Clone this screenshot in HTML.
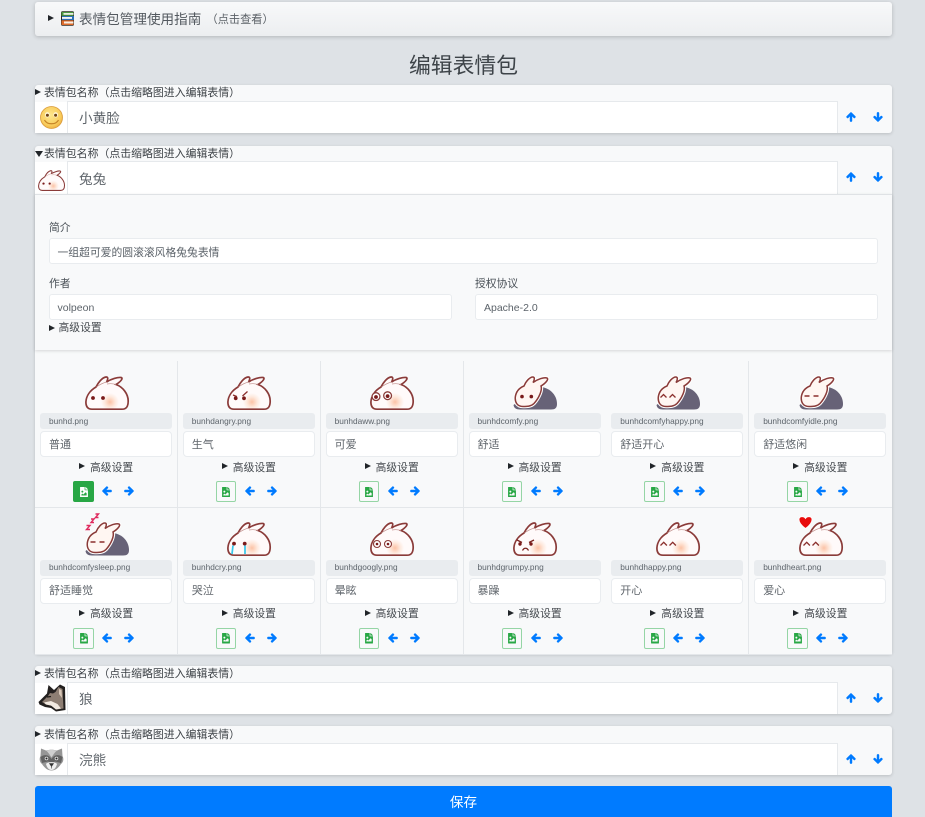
<!DOCTYPE html>
<html lang="zh"><head><meta charset="utf-8"><title>编辑表情包</title>
<style>
html,body{margin:0;padding:0;width:925px;height:817px;overflow:hidden;background:#dee2e6}
body{position:relative;font-family:"Liberation Sans","Noto Sans CJK SC",sans-serif;color:#212529}
div,span,svg{position:absolute;box-sizing:border-box}
#w{left:0;top:0;width:925px;height:817px;overflow:hidden;background:#dee2e6;filter:blur(.35px)}
.tx{white-space:nowrap;line-height:1}
.card{left:35px;width:857px;background:#f8f9fa;border-radius:3px;box-shadow:0 1px 3px rgba(0,0,0,.16)}
.lab{font-size:10.9px;color:#3d4247;left:44px}
.tri{width:0;height:0;border-style:solid;border-width:3.7px 0 3.7px 6.2px;border-color:transparent transparent transparent #212529}
.trd{width:0;height:0;border-style:solid;border-width:6px 4px 0 4px;border-color:#212529 transparent transparent transparent}
.inp{background:#fff;border:1px solid #e6e9ec}
.big{font-size:13.6px;color:#60666c;left:79px}
.thumb{left:35px;width:33px;background:#fff;border-right:1px solid #e3e6e9}
.field{background:#fff;border:1px solid #e9ecef;border-radius:3px}
.fl{font-size:10.8px;color:#495057}
.ft{font-size:10.8px;color:#5c636a}
.cell{width:143px;height:147px;background:#f8f9fa;border-right:1px solid #e4e7ea;border-bottom:1px solid #e4e7ea}
.pill{left:5px;top:52px;width:132px;height:16px;background:#e9ecef;border-radius:3px}
.pt{left:14px;top:55.5px;font-size:8.3px;color:#5d646b}
.in{left:5px;top:70px;width:132px;height:26px;background:#fff;border:1px solid #e9ecef;border-radius:4px}
.it{left:14px;top:78.8px;font-size:11px;color:#60666c}
.adv{left:55px;top:101.8px;font-size:10.8px;color:#464b50}
.t2{left:44px;top:102.3px}
.bt{left:38px;top:120px;width:20.5px;height:21px;border:1px solid #95d5a5;border-radius:2px;background:#f8f9fa}
.bt.on{background:#28a745;border-color:#28a745}
.fi{left:5.5px;top:4.5px;width:8px;height:10.5px;fill:#28a745}
.on .fi{fill:#fff}
.ar{width:10px;height:10px;fill:#007bff;stroke:#007bff;stroke-width:45}
.bn{width:44px;height:34px;left:49.5px;top:15px;overflow:visible}
</style></head><body>
<div id="w">
<svg width="0" height="0" style="left:0;top:0">
<defs>
<radialGradient id="pe" gradientUnits="userSpaceOnUse" cx="25" cy="26" r="9"><stop offset="0" stop-color="#fcc3a6"/><stop offset=".6" stop-color="#feeadf"/><stop offset="1" stop-color="#fffafa"/></radialGradient>
<path id="fileic" d="M384 121.941V128H256V0h6.059a24 24 0 0 1 16.97 7.029l97.941 97.941a24.002 24.002 0 0 1 7.03 16.971zM248 160c-13.2 0-24-10.8-24-24V0H24C10.745 0 0 10.745 0 24v464c0 13.255 10.745 24 24 24h336c13.255 0 24-10.745 24-24V160H248zm-135.455 16c26.51 0 48 21.49 48 48s-21.49 48-48 48-48-21.49-48-48 21.491-48 48-48zm208 240h-256l.485-48.485L104.545 328c4.686-4.686 11.799-4.201 16.485.485L160.545 368 264.06 264.485c4.686-4.686 12.284-4.686 16.971 0L320.545 304v112z"/>
<path id="arr" d="M34.9 289.5l-22.2-22.2c-9.4-9.4-9.4-24.6 0-33.9L207 39c9.4-9.4 24.6-9.4 33.9 0l194.3 194.3c9.4 9.4 9.4 24.6 0 33.9L413 289.4c-9.5 9.5-25 9.3-34.3-.4L264 168.6V456c0 13.3-10.7 24-24 24h-32c-13.3 0-24-10.7-24-24V168.6L69.2 289.1c-9.3 9.8-24.8 10-34.3.4z"/>
<g id="bun"><path d="M7 33.2C2.500 33.200.9 30 .9 26 1.200 20 5 14.500 11 11 13 7 17 1.500 21 1 23.500.8 23 3.500 21.500 6 26 3 33 1 36 1.500 38.500 2 36 5.500 31 8.500 38 11 43.200 18 43.200 25 43.200 31 41 33.200 37 33.200Z" fill="url(#pe)" stroke="#8a3b39" stroke-width="1.700"/><path d="M11.500 11C14 9 18 7 21.500 6M31 8.500C28 7.500 25 7.500 22 8" fill="none" stroke="#c08d8a" stroke-width=".7"/></g>
<g id="cmf"><path d="M24 11C35 10 44 18 44 28 44 32 42 33.500 38 33.500L7 33.500C3 33.500 1 32 .5 29Z" fill="#676277"/><path d="M10 30.500C4 30.500 1.800 26 2.300 21 3 16 6 12 11 10 13 5 17 .8 20 1 22 1.200 21.500 4 20 6.500 25 3 31 1 34 2 36 3 33 7 28 10 29.500 14 26 22 21 27.500 18 30.500 14 30.500 10 30.500Z" fill="#fff" stroke="#fff" stroke-width="3.600"/><path d="M10 30.500C4 30.500 1.800 26 2.300 21 3 16 6 12 11 10 13 5 17 .8 20 1 22 1.200 21.500 4 20 6.500 25 3 31 1 34 2 36 3 33 7 28 10 29.500 14 26 22 21 27.500 18 30.500 14 30.500 10 30.500Z" fill="#fff6f2" stroke="#8a3b39" stroke-width="1.500"/></g>
</defs></svg>

<div class="card" style="top:2px;height:34px;background:linear-gradient(#f8f9fa,#eceef0);box-shadow:0 1px 4px rgba(0,0,0,.2)"></div>
<div class="tri" style="left:48px;top:15px"></div>
<svg style="left:60px;top:11px" width="15" height="15" viewBox="0 0 15 15"><rect x="1" y=".3" width="13" height="14.400" rx="1.500" fill="#2f2a22"/><rect x="1.500" y="1" width="12" height="3.800" fill="#4c9a40"/><rect x="3.500" y="2" width="10" height="1.800" fill="#e8eee0"/><rect x="2" y="5" width="12" height="4" fill="#2c6fb4"/><rect x="2" y="6" width="10" height="1.900" fill="#f2f3f4"/><rect x="1.500" y="9.300" width="12" height="4.700" fill="#de6a2a"/><rect x="4" y="10.500" width="9.500" height="2" fill="#f6eee4"/></svg>
<div class="tx" style="left:79px;top:12.5px;font-size:13.6px;color:#53595f">表情包管理使用指南</div>
<div class="tx" style="left:206.500px;top:15px;font-size:11.2px;color:#5b6167">（点击查看）</div>
<div class="tx" style="left:1px;width:925px;text-align:center;top:54.5px;font-size:21.8px;color:#3e4449">编辑表情包</div>

<!-- card 1 -->
<div class="card" style="top:85px;height:48px"></div>
<div class="tri" style="left:35px;top:88.5px"></div>
<div class="tx lab" style="top:87.5px">表情包名称（点击缩略图进入编辑表情）</div>
<div class="thumb" style="top:102px;height:31px"></div>
<div class="inp" style="left:67px;top:101px;width:771px;height:32px;border-bottom:0"></div>
<div class="tx big" style="top:111.5px">小黄脸</div>
<svg style="left:40px;top:106px" width="23" height="23" viewBox="0 0 23 23"><defs><radialGradient id="sm" cx=".45" cy=".4" r=".65"><stop offset="0" stop-color="#fde78f"/><stop offset=".7" stop-color="#f9cd5d"/><stop offset="1" stop-color="#eba93c"/></radialGradient></defs><circle cx="11.500" cy="11.500" r="11" fill="url(#sm)" stroke="#d99a3a" stroke-width=".8"/><ellipse cx="7.300" cy="8.800" rx="2.300" ry="2.700" fill="#fff6d8"/><ellipse cx="15.700" cy="8.800" rx="2.300" ry="2.700" fill="#fff6d8"/><circle cx="7.400" cy="9.300" r="1.500" fill="#6f4213"/><circle cx="15.600" cy="9.300" r="1.500" fill="#6f4213"/><path d="M4.500 14C7 19 16 19 18.500 14" fill="none" stroke="#c68427" stroke-width="1.200"/></svg>
<svg class="ar" style="left:846px;top:112px" viewBox="0 0 448 512"><use href="#arr"/></svg>
<svg class="ar" style="left:873px;top:112px;transform:rotate(180deg)" viewBox="0 0 448 512"><use href="#arr"/></svg>

<!-- card 2 -->
<div class="card" style="top:146px;height:508px"></div>
<div class="trd" style="left:35px;top:150.5px"></div>
<div class="tx lab" style="top:148.5px">表情包名称（点击缩略图进入编辑表情）</div>
<div class="thumb" style="top:162px;height:32px"></div>
<div class="inp" style="left:67px;top:161px;width:771px;height:33px;border-bottom:0"></div>
<div class="tx big" style="top:172.5px">兔兔</div>
<svg style="left:38px;top:170px;overflow:visible" width="27" height="21" viewBox="0 0 44 34"><use href="#bun"/><circle cx="9" cy="22" r="1.800" fill="#7a1a1a"/><circle cx="19" cy="22" r="1.800" fill="#7a1a1a"/></svg>
<svg class="ar" style="left:846px;top:172px" viewBox="0 0 448 512"><use href="#arr"/></svg>
<svg class="ar" style="left:873px;top:172px;transform:rotate(180deg)" viewBox="0 0 448 512"><use href="#arr"/></svg>

<div style="left:35px;top:194px;width:857px;height:156px;background:#f8f9fa;box-shadow:0 1px 3px rgba(0,0,0,.14);border-top:1px solid #dfe2e5"></div>
<div class="tx fl" style="left:49px;top:222.5px">简介</div>
<div class="field" style="left:49px;top:238px;width:829px;height:26px"></div>
<div class="tx ft" style="left:57.5px;top:247.800px">一组超可爱的圆滚滚风格兔兔表情</div>
<div class="tx fl" style="left:49px;top:278.5px">作者</div>
<div class="field" style="left:49px;top:294px;width:403px;height:26px"></div>
<div class="tx ft" style="left:57.5px;top:302.5px;font-size:10.5px">volpeon</div>
<div class="tx fl" style="left:475px;top:278.5px">授权协议</div>
<div class="field" style="left:475px;top:294px;width:403px;height:26px"></div>
<div class="tx ft" style="left:484px;top:302.5px;font-size:10.5px">Apache-2.0</div>
<div class="tri" style="left:49px;top:324.8px"></div>
<div class="tx" style="left:58.5px;top:323px;font-size:10.8px;color:#464b50">高级设置</div>
<div style="left:35px;top:361px;width:857px;height:1px;background:#e4e7ea"></div>

<!-- row 1 -->
<div class="cell" style="left:35px;top:361px"><svg class="bn" viewBox="0 0 44 34"><use href="#bun"/><circle cx="8" cy="22" r="1.900" fill="#7a1a1a"/><circle cx="18" cy="22" r="1.900" fill="#7a1a1a"/></svg><div class="pill"></div><div class="tx pt">bunhd.png</div><div class="in"></div><div class="tx it">普通</div><div class="tri t2"></div><div class="tx adv">高级设置</div><div class="bt on"><svg class="fi" viewBox="0 0 384 512"><use href="#fileic"/></svg></div><svg class="ar" style="left:67px;top:125px;transform:rotate(-90deg)" viewBox="0 0 448 512"><use href="#arr"/></svg><svg class="ar" style="left:89px;top:125px;transform:rotate(90deg)" viewBox="0 0 448 512"><use href="#arr"/></svg></div>

<div class="cell" style="left:177.8px;top:361px"><svg class="bn" viewBox="0 0 44 34"><use href="#bun"/><circle cx="8.700" cy="22.300" r="1.900" fill="#7a1a1a"/><circle cx="17" cy="22.300" r="1.900" fill="#7a1a1a"/><path d="M6 19l4 1.600M20.500 15.500l-5 4.500" stroke="#8b2f2c" stroke-width="1.300" fill="none"/></svg><div class="pill"></div><div class="tx pt">bunhdangry.png</div><div class="in"></div><div class="tx it">生气</div><div class="tri t2"></div><div class="tx adv">高级设置</div><div class="bt"><svg class="fi" viewBox="0 0 384 512"><use href="#fileic"/></svg></div><svg class="ar" style="left:67px;top:125px;transform:rotate(-90deg)" viewBox="0 0 448 512"><use href="#arr"/></svg><svg class="ar" style="left:89px;top:125px;transform:rotate(90deg)" viewBox="0 0 448 512"><use href="#arr"/></svg></div>

<div class="cell" style="left:320.6px;top:361px"><svg class="bn" viewBox="0 0 44 34"><use href="#bun"/><circle cx="6" cy="20.600" r="3.900" fill="#fff" stroke="#8a3b39" stroke-width="1.300"/><circle cx="17.600" cy="19.700" r="3.900" fill="#fff" stroke="#8a3b39" stroke-width="1.300"/><circle cx="6" cy="21" r="1.900" fill="#7a1a1a"/><circle cx="17.600" cy="20.100" r="1.900" fill="#7a1a1a"/></svg><div class="pill"></div><div class="tx pt">bunhdaww.png</div><div class="in"></div><div class="tx it">可爱</div><div class="tri t2"></div><div class="tx adv">高级设置</div><div class="bt"><svg class="fi" viewBox="0 0 384 512"><use href="#fileic"/></svg></div><svg class="ar" style="left:67px;top:125px;transform:rotate(-90deg)" viewBox="0 0 448 512"><use href="#arr"/></svg><svg class="ar" style="left:89px;top:125px;transform:rotate(90deg)" viewBox="0 0 448 512"><use href="#arr"/></svg></div>

<div class="cell" style="left:463.5px;top:361px"><svg class="bn" viewBox="0 0 44 34"><use href="#cmf"/><circle cx="9" cy="20.600" r="1.800" fill="#7a1a1a"/><circle cx="18.300" cy="20.600" r="1.800" fill="#7a1a1a"/></svg><div class="pill"></div><div class="tx pt">bunhdcomfy.png</div><div class="in"></div><div class="tx it">舒适</div><div class="tri t2"></div><div class="tx adv">高级设置</div><div class="bt"><svg class="fi" viewBox="0 0 384 512"><use href="#fileic"/></svg></div><svg class="ar" style="left:67px;top:125px;transform:rotate(-90deg)" viewBox="0 0 448 512"><use href="#arr"/></svg><svg class="ar" style="left:89px;top:125px;transform:rotate(90deg)" viewBox="0 0 448 512"><use href="#arr"/></svg></div>

<div class="cell" style="left:606.3px;top:361px"><svg class="bn" viewBox="0 0 44 34"><use href="#cmf"/><path d="M4.500 21.500l3-3 3 3M13.500 21.500l3-3 3 3" fill="none" stroke="#8b2f2c" stroke-width="1.300"/></svg><div class="pill"></div><div class="tx pt">bunhdcomfyhappy.png</div><div class="in"></div><div class="tx it">舒适开心</div><div class="tri t2"></div><div class="tx adv">高级设置</div><div class="bt"><svg class="fi" viewBox="0 0 384 512"><use href="#fileic"/></svg></div><svg class="ar" style="left:67px;top:125px;transform:rotate(-90deg)" viewBox="0 0 448 512"><use href="#arr"/></svg><svg class="ar" style="left:89px;top:125px;transform:rotate(90deg)" viewBox="0 0 448 512"><use href="#arr"/></svg></div>

<div class="cell" style="left:749.2px;top:361px;width:142.8px;border-right:0"><svg class="bn" viewBox="0 0 44 34"><use href="#cmf"/><path d="M5.500 20h5M14.500 20h5" fill="none" stroke="#8b2f2c" stroke-width="1.400"/></svg><div class="pill"></div><div class="tx pt">bunhdcomfyidle.png</div><div class="in"></div><div class="tx it">舒适悠闲</div><div class="tri t2"></div><div class="tx adv">高级设置</div><div class="bt"><svg class="fi" viewBox="0 0 384 512"><use href="#fileic"/></svg></div><svg class="ar" style="left:67px;top:125px;transform:rotate(-90deg)" viewBox="0 0 448 512"><use href="#arr"/></svg><svg class="ar" style="left:89px;top:125px;transform:rotate(90deg)" viewBox="0 0 448 512"><use href="#arr"/></svg></div>

<!-- row 2 -->
<div class="cell" style="left:35px;top:507.5px"><svg class="bn" viewBox="0 0 44 34" style="top:14.5px"><use href="#cmf"/><path d="M5.500 20h5M14.500 20h5" fill="none" stroke="#8b2f2c" stroke-width="1.400"/><path d="M1.500 3.500h3.500l-3.500 4h3.500M6 -3h3l-3 3.500h3M10.500 -8h3l-3 3.500h3" fill="none" stroke="#df2a5e" stroke-width="1.400"/></svg><div class="pill"></div><div class="tx pt">bunhdcomfysleep.png</div><div class="in"></div><div class="tx it">舒适睡觉</div><div class="tri t2"></div><div class="tx adv">高级设置</div><div class="bt"><svg class="fi" viewBox="0 0 384 512"><use href="#fileic"/></svg></div><svg class="ar" style="left:67px;top:125px;transform:rotate(-90deg)" viewBox="0 0 448 512"><use href="#arr"/></svg><svg class="ar" style="left:89px;top:125px;transform:rotate(90deg)" viewBox="0 0 448 512"><use href="#arr"/></svg></div>

<div class="cell" style="left:177.8px;top:507.5px"><svg class="bn" viewBox="0 0 44 34" style="top:14.5px"><use href="#bun"/><path d="M6 23.500L5 32M18 23.500V32" stroke="#35c6ea" stroke-width="1.700" fill="none"/><circle cx="7" cy="21.600" r="1.900" fill="#7a1a1a"/><circle cx="17.700" cy="21.600" r="1.900" fill="#7a1a1a"/></svg><div class="pill"></div><div class="tx pt">bunhdcry.png</div><div class="in"></div><div class="tx it">哭泣</div><div class="tri t2"></div><div class="tx adv">高级设置</div><div class="bt"><svg class="fi" viewBox="0 0 384 512"><use href="#fileic"/></svg></div><svg class="ar" style="left:67px;top:125px;transform:rotate(-90deg)" viewBox="0 0 448 512"><use href="#arr"/></svg><svg class="ar" style="left:89px;top:125px;transform:rotate(90deg)" viewBox="0 0 448 512"><use href="#arr"/></svg></div>

<div class="cell" style="left:320.6px;top:507.5px"><svg class="bn" viewBox="0 0 44 34" style="top:14.5px"><use href="#bun"/><circle cx="7" cy="22" r="3.500" fill="#fff" stroke="#8a3b39" stroke-width="1.100"/><circle cx="18" cy="22" r="3.500" fill="#fff" stroke="#8a3b39" stroke-width="1.100"/><circle cx="7" cy="22" r="1.300" fill="#7a1a1a"/><circle cx="18" cy="22" r="1.300" fill="#7a1a1a"/></svg><div class="pill"></div><div class="tx pt">bunhdgoogly.png</div><div class="in"></div><div class="tx it">晕眩</div><div class="tri t2"></div><div class="tx adv">高级设置</div><div class="bt"><svg class="fi" viewBox="0 0 384 512"><use href="#fileic"/></svg></div><svg class="ar" style="left:67px;top:125px;transform:rotate(-90deg)" viewBox="0 0 448 512"><use href="#arr"/></svg><svg class="ar" style="left:89px;top:125px;transform:rotate(90deg)" viewBox="0 0 448 512"><use href="#arr"/></svg></div>

<div class="cell" style="left:463.5px;top:507.5px"><svg class="bn" viewBox="0 0 44 34" style="top:14.5px"><use href="#bun"/><circle cx="7" cy="22" r="1.700" fill="#7a1a1a"/><circle cx="18" cy="22" r="1.700" fill="#7a1a1a"/><path d="M4 18l5 2.500M21 18l-5 2.500M9.500 28.500C11 25.500 14 25.500 15.500 28.500" fill="none" stroke="#7a2320" stroke-width="1.300"/></svg><div class="pill"></div><div class="tx pt">bunhdgrumpy.png</div><div class="in"></div><div class="tx it">暴躁</div><div class="tri t2"></div><div class="tx adv">高级设置</div><div class="bt"><svg class="fi" viewBox="0 0 384 512"><use href="#fileic"/></svg></div><svg class="ar" style="left:67px;top:125px;transform:rotate(-90deg)" viewBox="0 0 448 512"><use href="#arr"/></svg><svg class="ar" style="left:89px;top:125px;transform:rotate(90deg)" viewBox="0 0 448 512"><use href="#arr"/></svg></div>

<div class="cell" style="left:606.3px;top:507.5px"><svg class="bn" viewBox="0 0 44 34" style="top:14.5px"><use href="#bun"/><path d="M4.500 23.500l3.200-3.200 3.200 3.200M13.500 23.500l3.200-3.200 3.200 3.200" fill="none" stroke="#8b2f2c" stroke-width="1.300"/></svg><div class="pill"></div><div class="tx pt">bunhdhappy.png</div><div class="in"></div><div class="tx it">开心</div><div class="tri t2"></div><div class="tx adv">高级设置</div><div class="bt"><svg class="fi" viewBox="0 0 384 512"><use href="#fileic"/></svg></div><svg class="ar" style="left:67px;top:125px;transform:rotate(-90deg)" viewBox="0 0 448 512"><use href="#arr"/></svg><svg class="ar" style="left:89px;top:125px;transform:rotate(90deg)" viewBox="0 0 448 512"><use href="#arr"/></svg></div>

<div class="cell" style="left:749.2px;top:507.5px;width:142.8px;border-right:0"><svg class="bn" viewBox="0 0 44 34" style="top:14.5px"><use href="#bun"/><path d="M4.500 23.500l3.200-3.200 3.200 3.200M13.500 23.500l3.200-3.200 3.200 3.200" fill="none" stroke="#8b2f2c" stroke-width="1.300"/><path d="M6.500 6.500C1 2.500 0-.5 0-2.500 0-5.500 4.500-6.500 6.500-3.500 8.500-6.500 13-5.500 13-2.500 13-.5 12 2.500 6.500 6.500Z" fill="#e80c0c" stroke="#fff" stroke-width=".8"/></svg><div class="pill"></div><div class="tx pt">bunhdheart.png</div><div class="in"></div><div class="tx it">爱心</div><div class="tri t2"></div><div class="tx adv">高级设置</div><div class="bt"><svg class="fi" viewBox="0 0 384 512"><use href="#fileic"/></svg></div><svg class="ar" style="left:67px;top:125px;transform:rotate(-90deg)" viewBox="0 0 448 512"><use href="#arr"/></svg><svg class="ar" style="left:89px;top:125px;transform:rotate(90deg)" viewBox="0 0 448 512"><use href="#arr"/></svg></div>

<!-- card 3 -->
<div class="card" style="top:666px;height:48px"></div>
<div class="tri" style="left:35px;top:669.5px"></div>
<div class="tx lab" style="top:668.5px">表情包名称（点击缩略图进入编辑表情）</div>
<div class="thumb" style="top:683px;height:31px"></div>
<div class="inp" style="left:67px;top:682px;width:771px;height:32px;border-bottom:0"></div>
<div class="tx big" style="top:692.5px">狼</div>
<svg style="left:38px;top:684px" width="28" height="28" viewBox="0 0 28 28"><path d="M.5 18L9 9.500 10.500 1 16 6 22 .5 27 3 27.500 26 18 27.500 13 24 7 23 1.500 20.500Z" fill="#23201f"/><path d="M12 9L15 9.500 17.500 8 20.500 3 24.500 5 25.500 24.500 18.500 25.500 14 22 8 20.500 4 18 10 12Z" fill="#8d7e73"/><path d="M6 18.500L13 17 19.500 20 23 24.500 18 25.500 13 21.500 8 20.500Z" fill="#f1e9e0"/><path d="M21 5l2.500 1 .5 8-3-4Z" fill="#d8c7b8"/><path d="M9 13L13 12.500" stroke="#1c1a18" stroke-width="1.200"/></svg>
<svg class="ar" style="left:846px;top:693px" viewBox="0 0 448 512"><use href="#arr"/></svg>
<svg class="ar" style="left:873px;top:693px;transform:rotate(180deg)" viewBox="0 0 448 512"><use href="#arr"/></svg>

<!-- card 4 -->
<div class="card" style="top:726px;height:49px"></div>
<div class="tri" style="left:35px;top:730.5px"></div>
<div class="tx lab" style="top:729.5px">表情包名称（点击缩略图进入编辑表情）</div>
<div class="thumb" style="top:744px;height:31px"></div>
<div class="inp" style="left:67px;top:743px;width:771px;height:32px;border-bottom:0"></div>
<div class="tx big" style="top:753.5px">浣熊</div>
<svg style="left:39px;top:747px" width="25" height="24" viewBox="0 0 25 24"><path d="M2 1.500L7 3.500C10 2.500 15 2.500 18 3.500L23 1.500 23.500 9C25 12 24.500 15 22 17 19 21.500 16 23.500 12.500 23.500 9 23.500 6 21.500 3 17 .5 15 0 12 1.500 9Z" fill="#969696"/><path d="M1.500 10C5 7 10 7.500 12.500 12 15 7.500 20 7 23.500 10L22 16 16 14.500 12.500 16 9 14.500 3 16Z" fill="#626262"/><path d="M7 3.500C9 5 11 8 12.500 10.500 14 8 16 5 18 3.500 15 2.800 10 2.800 7 3.500Z" fill="#cfcfcf"/><circle cx="7.500" cy="11.500" r="1.800" fill="#e8e8e8"/><circle cx="17.500" cy="11.500" r="1.800" fill="#e8e8e8"/><circle cx="7.500" cy="11.500" r="1" fill="#222"/><circle cx="17.500" cy="11.500" r="1" fill="#222"/><path d="M7 17C9 14.500 16 14.500 18 17 17 21 15 23 12.500 23 10 23 8 21 7 17Z" fill="#efefef"/><path d="M10.500 16.500h4L12.500 19.500ZM12.500 19.500V21.500" fill="#333" stroke="#333" stroke-width=".6"/></svg>
<svg class="ar" style="left:846px;top:754px" viewBox="0 0 448 512"><use href="#arr"/></svg>
<svg class="ar" style="left:873px;top:754px;transform:rotate(180deg)" viewBox="0 0 448 512"><use href="#arr"/></svg>

<!-- save -->
<div style="left:35px;top:786px;width:857px;height:40px;background:#007bff;border-radius:3px"></div>
<div class="tx" style="left:35px;width:857px;text-align:center;top:796px;font-size:13.6px;color:#fff">保存</div>
</div>
</body></html>
